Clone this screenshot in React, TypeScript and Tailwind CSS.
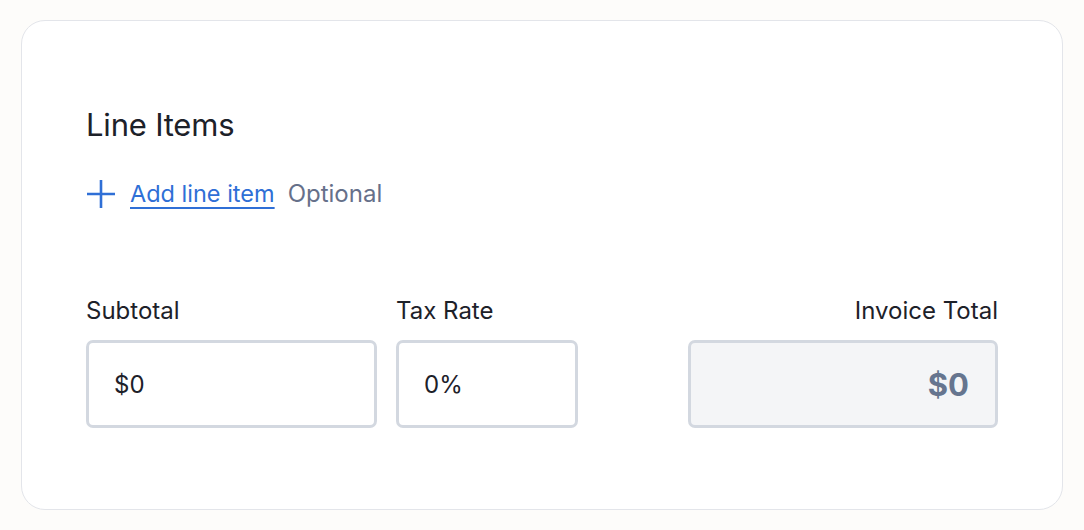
const font = { fontFamily: "Inter, 'Noto Sans', sans-serif" };

function PlusIcon() {
  return (
    <svg width="30" height="30" viewBox="0 0 30 30" className="text-[#2f6fd6]">
      <path d="M15 1v28M1 15h28" stroke="currentColor" strokeWidth="2.6" fill="none" />
    </svg>
  );
}

export default function App() {
  return (
    <div className="min-h-screen bg-[#fdfcfa] px-[21px] pt-[20px]" style={font}>
      <div className="h-[490px] rounded-[24px] border-[1.5px] border-[#e3e5ea] bg-white px-[64px] pt-[86px]">
        <h2 className="text-[31px] leading-[36px] text-[#1d2129] tracking-[-0.2px]">Line Items</h2>

        <div className="mt-[33px] flex items-center h-[36px]">
          <PlusIcon />
          <a href="#" className="ml-[14px] text-[23.5px] text-[#2f6fd6] underline underline-offset-[5px] decoration-[2px]">
            Add line item
          </a>
          <span className="ml-[13px] text-[24px] text-[#66708a]">Optional</span>
        </div>

        <div className="mt-[84px] flex items-end">
          <div className="flex flex-col w-[291px]">
            <label className="text-[24px] leading-[30px] text-[#1d2129]">Subtotal</label>
            <div className="mt-[14px] h-[88px] rounded-[7px] border-[3px] border-[#d3d8e0] flex items-center px-[25px] pt-[2px] text-[24px] text-[#1d2129]">
              $0
            </div>
          </div>
          <div className="ml-[19px] flex flex-col w-[182px]">
            <label className="text-[24px] leading-[30px] text-[#1d2129]">Tax Rate</label>
            <div className="mt-[14px] h-[88px] rounded-[7px] border-[3px] border-[#d3d8e0] flex items-center px-[25px] pt-[2px] text-[24px] text-[#1d2129]">
              0%
            </div>
          </div>
          <div className="flex-1" />
          <div className="flex flex-col w-[310px]">
            <label className="text-[24px] leading-[30px] text-[#1d2129] text-right">Invoice Total</label>
            <div className="mt-[14px] h-[88px] rounded-[7px] border-[3px] border-[#d3d8e0] bg-[#f4f5f7] flex items-center justify-end px-[26px] pt-[2px] text-[31px] font-bold text-[#66758f]">
              $0
            </div>
          </div>
        </div>
      </div>
    </div>
  );
}
